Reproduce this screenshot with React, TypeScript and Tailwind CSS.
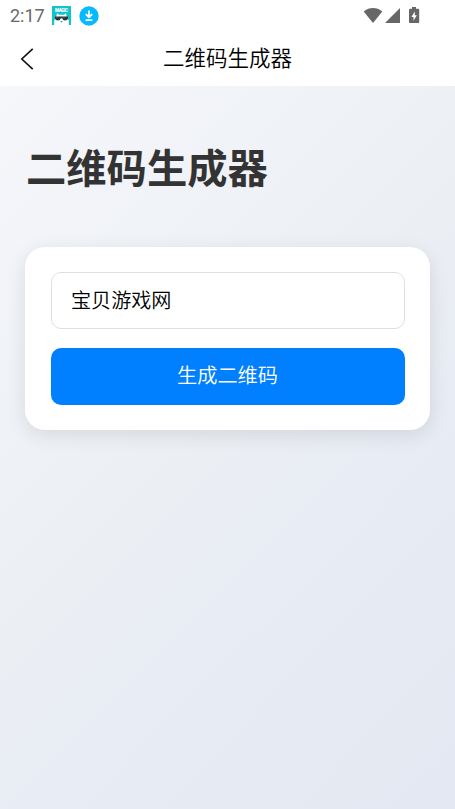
import { useState } from 'react';

const fontStack = "font-['Noto_Sans_CJK_SC',sans-serif]";

function MascotIcon() {
    return (
        <svg width="19" height="19" viewBox="0 0 19 19">
            <rect width="19" height="19" fill="#12c3cc" />
            <text x="9.5" y="6" textAnchor="middle" fontSize="4.6" fontWeight="900" fill="#fff" fontFamily="Roboto" textLength="13">MAGIC</text>
            <path d="M2.2 19V14.5L4.2 11L5 7.2L7 8.8H12L14 7.2L14.8 11L16.8 14.5V19Z" fill="#fff" />
            <path d="M3 10.5H16V12.5Q15.5 14.5 13 14.5Q10.8 14.5 10.2 12.3H8.8Q8.2 14.5 6 14.5Q3.5 14.5 3 12.5Z" fill="#2b3436" />
            <path d="M4.5 12L5.5 11M11.5 12L12.5 11" stroke="#8a9294" strokeWidth="0.6" />
            <path d="M8 15H11L9.5 16.7Z" fill="#12c3cc" />
        </svg>
    );
}

function DownloadIcon() {
    return (
        <svg width="20" height="20" viewBox="0 0 20 20">
            <circle cx="10" cy="10" r="9.7" fill="#06baff" />
            <path d="M10 4.5V10.5M6.8 8.2L10 11.2L13.2 8.2M6.6 14.2H13.4" stroke="#fff" strokeWidth="1.8" fill="none" />
        </svg>
    );
}

function StatusBar() {
    return (
        <div className="flex h-8 items-center bg-white pl-2.5">
            <span className="w-[42px] font-[Roboto] text-[18px] leading-8 text-[#686868]">2:17</span>
            <div className="-mt-px"><MascotIcon /></div>
            <div className="-mt-px ml-2"><DownloadIcon /></div>
            <svg className="ml-auto mr-[34px]" width="58" height="18" viewBox="0 0 58 18" fill="#676767">
                <path d="M0.7 4.4C6.2 -0.2 13.8 -0.2 19.3 4.4L10 16Z" />
                <path d="M22 16L37 1V16Z" />
                <path d="M49 1.7V0H53V1.7H55Q56.2 1.7 56.2 2.9V14.9Q56.2 16.1 55 16.1H47.2Q46 16.1 46 14.9V2.9Q46 1.7 47.2 1.7Z" />
                <path d="M51.8 4.5L48.4 9.9H50.5V13.7L53.8 8.3H51.8Z" fill="#fff" />
            </svg>
        </div>
    );
}

function NavBar() {
    return (
        <header className="grid h-[54px] grid-cols-[60px_1fr_60px] items-center bg-white">
            <button className="pl-5" aria-label="返回">
                <svg width="14" height="22" viewBox="0 0 14 22" fill="none">
                    <path d="M12.7 0.8L1.8 11L12.7 21.2" stroke="#111" strokeWidth="1.6" />
                </svg>
            </button>
            <h1 className="pb-[5px] text-center text-[21.5px] leading-[49px] font-[350] text-black">二维码生成器</h1>
        </header>
    );
}

export default function App() {
    const [text, setText] = useState('宝贝游戏网');

    return (
        <div className={`${fontStack} flex h-[809px] w-full flex-col overflow-hidden`}>
            <StatusBar />
            <NavBar />
            <main className="flex-1 bg-[linear-gradient(135deg,#f5f7fb_0%,#ebeef3_50%,#e8ecf4_62%,#e3e8f2_100%)] px-[25px] pt-[50px]">
                <h2 className="pl-px text-[40.3px] leading-[60px] font-bold text-[#333]">二维码生成器</h2>

                {/* Input card */}
                <section className="mt-[51px] flex h-[183px] flex-col gap-[19px] rounded-[20px] bg-white px-[25.5px] pt-[25px] shadow-[0_5px_20px_rgba(0,0,0,0.1)]">
                    <input
                        value={text}
                        onChange={(e) => setText(e.target.value)}
                        className="h-[57px] w-full shrink-0 rounded-[10px] border border-[#dfdfdf] bg-white px-[19.5px] pb-[2px] text-[20.1px] font-[350] text-black outline-none"
                    />
                    <button className="h-[57px] w-full shrink-0 rounded-[10px] bg-[#0080ff] pb-[3px] text-[20.2px] font-[350] text-white">
                        生成二维码
                    </button>
                </section>
            </main>
        </div>
    );
}
